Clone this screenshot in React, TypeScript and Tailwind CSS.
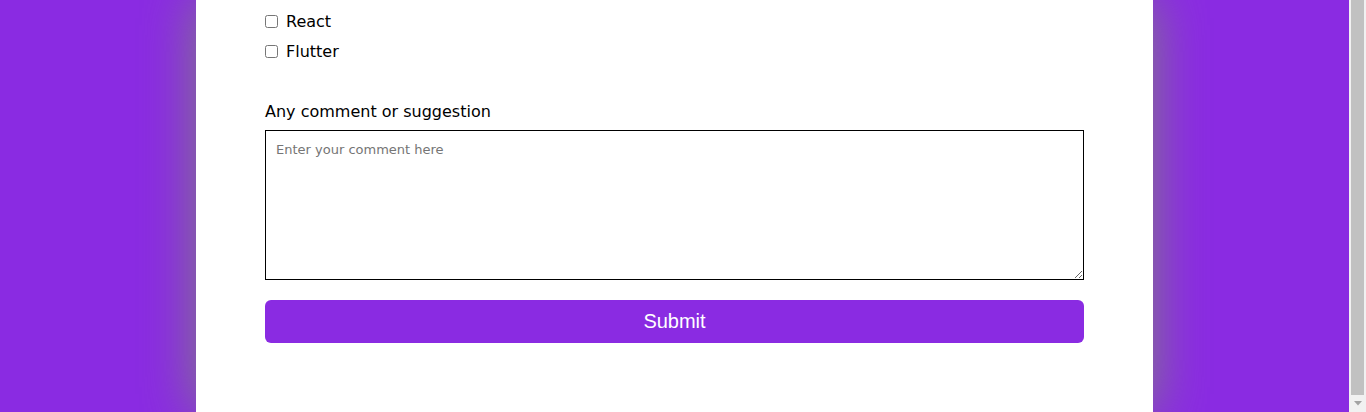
import React from "react";

const frameworks = ["React", "Flutter"];

function Scrollbar() {
  return (
    <div className="flex h-full w-[17px] shrink-0 flex-col bg-[#f1f1f1]">
      <div className="ml-[2px] mr-[2px] h-[395px] bg-[#c1c1c1]" />
      <div className="flex flex-1 items-center justify-center">
        <svg width="8" height="5" viewBox="0 0 8 5">
          <path d="M0 0h8L4 4.5z" fill="#a3a3a3" />
        </svg>
      </div>
    </div>
  );
}

export default function App() {
  return (
    <div className="flex h-[412px] w-full overflow-hidden">
      <div className="flex flex-1 justify-center overflow-hidden bg-[#8a2be2]">
        <div className="h-full w-[957px] shrink-0 bg-white px-[69px] pt-[6px] shadow-[0_0_50px_gray] font-['DejaVu_Sans',Verdana,sans-serif] text-[16px] text-black">
          {frameworks.map((name) => (
            <label key={name} className="flex h-[30px] items-center gap-[8px]">
              <input type="checkbox" className="h-[13px] w-[13px]" />
              <span className="pt-[2px] leading-[20px]">{name}</span>
            </label>
          ))}

          <div className="mt-[36px] mb-[8px] leading-[20px]">
            Any comment or suggestion
          </div>
          <textarea
            placeholder="Enter your comment here"
            className="block h-[150px] w-full border border-black px-[10px] py-[10px] text-[13px] leading-[18px] placeholder:text-[#757575] outline-none"
          />
          <button
            type="button"
            className="mt-[20px] flex h-[43px] w-full items-center justify-center rounded-[6px] bg-[#8a2be2] pb-[2px] font-['Liberation_Sans',Arial,sans-serif] text-[20px] text-white"
          >
            Submit
          </button>
        </div>
      </div>
      <Scrollbar />
    </div>
  );
}
